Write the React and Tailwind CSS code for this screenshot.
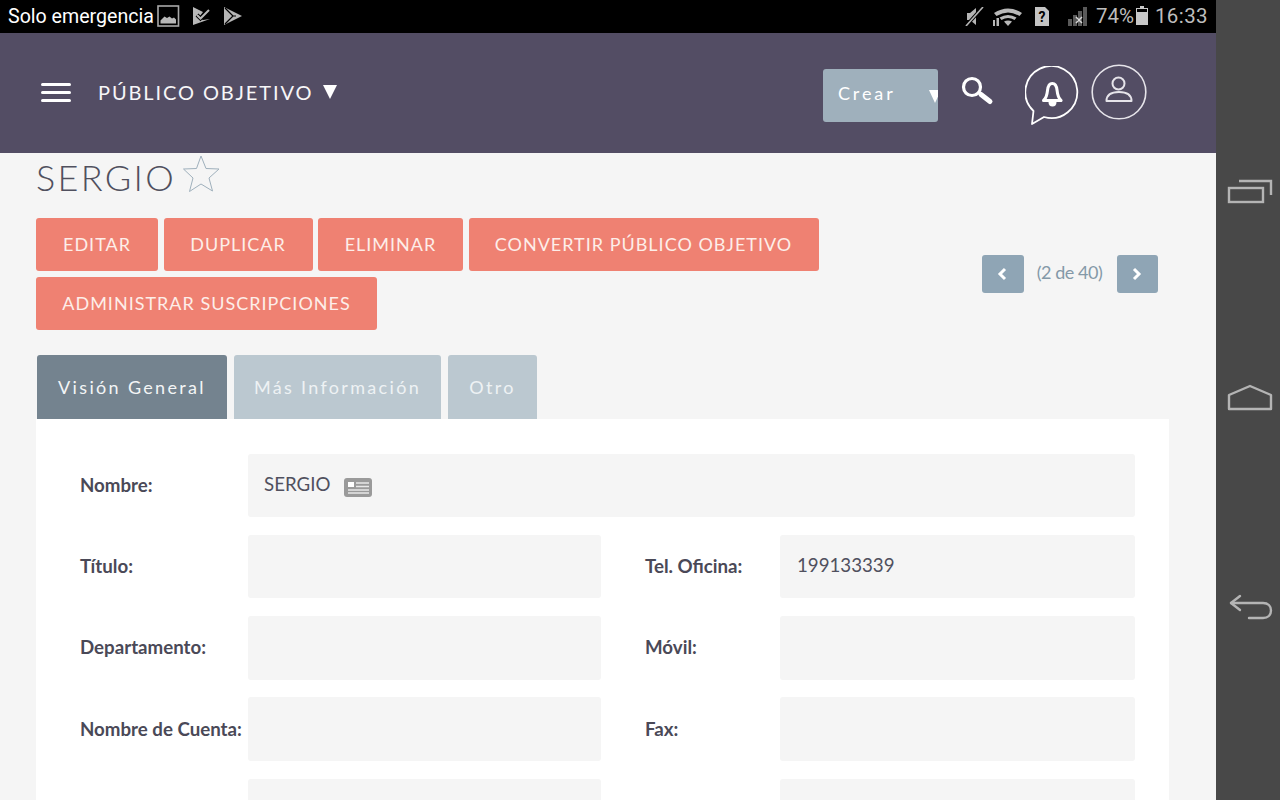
import React from "react";

const Field = ({ className = "", children }) => (
  <div className={`h-[63.5px] bg-[#f5f5f5] rounded-[3px] flex items-center text-[18.7px] text-[#50505e] pl-4 pb-[3px] ${className}`}>{children}</div>
);
const Label = ({ className = "", children }) => (
  <div className={`font-bold text-[18.7px] text-[#4a4957] whitespace-nowrap pb-[1px] ${className}`}>{children}</div>
);
const Btn = ({ w, children }) => (
  <button className={`h-[53px] ${w} bg-[#ef8172] rounded-[3px] text-[#fdeee9] text-[18px] tracking-[1px] flex items-center justify-center whitespace-nowrap`}>{children}</button>
);
const Tab = ({ w, active, children }) => (
  <div className={`${w} h-[64px] rounded-t-[3px] flex items-center justify-center pt-[2px] text-[18px] tracking-[2.33px] whitespace-nowrap ${active ? "bg-[#74838f] text-[#f3f5f6]" : "bg-[#bbc8d0] text-[#eef2f4]"}`}>{children}</div>
);
const Row = ({ l, v, r, rv }) => (
  <div className="flex items-center h-[63.5px] mb-[17.8px]">
    <Label className="w-[168px]">{l}</Label>
    <Field className="w-[353px]">{v}</Field>
    <Label className="w-[135px] ml-[44px]">{r}</Label>
    <Field className="w-[355px] pl-[17px]">{rv}</Field>
  </div>
);

export default function App() {
  return (
    <div className="w-[1280px] h-[800px] overflow-hidden flex font-['Lato',sans-serif]">
      <div className="w-[1216px] h-full flex flex-col overflow-hidden bg-[#f5f5f5]">
        {/* status bar */}
        <div className="h-[33px] shrink-0 bg-black flex items-center justify-between pl-2 pr-2 font-['Roboto',sans-serif] text-[20.5px]">
          <div className="flex items-center text-white">
            <span className="text-[19.6px]">Solo emergencia</span>
            <svg width="23" height="22" viewBox="0 0 23 22" className="ml-[3px]" fill="none">
              <rect x="1" y="1" width="20.500" height="20" stroke="#a8a8a8" strokeWidth="1.600" />
              <path d="M3.500 18.500v-3l4-4 2.500 1.500 2.500-1.500 2.500 2 2-1 2 2v4z" fill="#b8b8b8" />
            </svg>
            <svg width="18" height="18" viewBox="0 0 18 18" className="ml-[13px]" fill="#b8b8b8">
              <path d="M0 0l10 5-3 4-1 0 0 0 2 3 2 1 7-1-17 6z" />
              <path d="M4 8l3.500 3.500L16 3" stroke="#000" strokeWidth="4" fill="none" />
              <path d="M4 8l3.500 3.500L16 3" stroke="#b8b8b8" strokeWidth="2" fill="none" />
            </svg>
            <svg width="18" height="18" viewBox="0 0 18 18" className="ml-[13px]" fill="#b5b5b5">
              <path d="M0 0l18 9-18 9z" />
              <path d="M1 1l8 8-8 8M9 9h3" stroke="#000" strokeWidth="1.200" fill="none" />
            </svg>
          </div>
          <div className="flex items-center text-[#bdbdbd]">
            <svg width="19" height="19" viewBox="0 0 19 19" fill="#b5b5b5">
              <path d="M2 6h3l6-5v17l-6-5H2z" />
              <path d="M1 19L17 1" stroke="#000" strokeWidth="3.400" />
              <path d="M1 19L18 0" stroke="#b5b5b5" strokeWidth="1.600" />
            </svg>
            <svg width="30" height="18" viewBox="0 0 30 18" className="ml-[9px]" fill="#b8b8b8">
              <path d="M1 5q14-9 28 0l-2.500 3q-11.500-7-23 0z" />
              <path d="M6.500 9.500q8.500-5 17 0l-2 2.500q-6.500-4-13 0z" />
              <path d="M11 13.500q4-2.200 8 0L15 18z" />
              <rect x="0" y="12" width="2" height="6" />
              <rect x="3.500" y="10" width="2.500" height="8" />
            </svg>
            <svg width="14" height="19" viewBox="0 0 14 19" className="ml-[12px]">
              <path d="M0 0h10l4 4v15H0z" fill="#c4c4c4" />
              <text x="7" y="15" textAnchor="middle" fontSize="14" fontWeight="700" fill="#000" fontFamily="Roboto">?</text>
            </svg>
            <svg width="20" height="19" viewBox="0 0 20 19" className="ml-[19px]">
              <rect x="0" y="12" width="4" height="7" fill="#5a5a5a" />
              <rect x="5" y="8" width="4" height="11" fill="#5a5a5a" />
              <rect x="10" y="4" width="4" height="15" fill="#5a5a5a" />
              <rect x="15" y="0" width="4" height="19" fill="#5a5a5a" />
              <path d="M8 10l6 6m0-6l-6 6" stroke="#d8d8d8" strokeWidth="1.500" />
            </svg>
            <span className="ml-[8px]">74%</span>
            <svg width="12" height="19" viewBox="0 0 12 19" className="ml-[2px] mb-[3px]">
              <path d="M4 0h4v2h4v17H0V2h4z" fill="#c8c8c8" />
              <path d="M1 3h10v3H1z" fill="#000" />
            </svg>
            <span className="ml-[7px] tracking-[0.4px]">16:33</span>
          </div>
        </div>

        {/* header */}
        <div className="h-[120px] shrink-0 bg-[#534d64] flex items-center pl-[41px] relative">
          <div className="flex flex-col gap-[5px] w-[30px] mt-[-1px]">
            <div className="h-[3px] bg-white rounded-sm" />
            <div className="h-[3px] bg-white rounded-sm" />
            <div className="h-[3px] bg-white rounded-sm" />
          </div>
          <div className="ml-[27px] text-[#f7f6f8] text-[20px] tracking-[1.9px] whitespace-nowrap mt-[-3px]">PÚBLICO OBJETIVO</div>
          <svg width="14" height="14" viewBox="0 0 14 14" className="ml-[10px] mt-[-2px]"><path d="M0 0h14L7 14z" fill="#fff" /></svg>
          <div className="flex-1" />
          <div className="w-[115px] h-[53px] mt-[5px] bg-[#9fb0bc] rounded-[3px] text-white text-[18px] tracking-[2.9px] flex items-center pl-[15px] pb-[5px] relative overflow-hidden">
            Crear
            <svg width="12" height="13" viewBox="0 0 12 13" className="absolute right-[-3px] top-[21px]"><path d="M0 0h12L6 13z" fill="#fff" /></svg>
          </div>
          <svg width="34" height="34" viewBox="0 0 34 34" className="ml-[23px] mb-[6px]" fill="none" stroke="#fff">
            <circle cx="11" cy="14" r="8.500" strokeWidth="3.200" />
            <path d="M20 21.500l9 7" strokeWidth="5" strokeLinecap="round" />
          </svg>
          <svg width="58" height="62" viewBox="0 0 58 62" className="ml-[30px] mt-[8px]" fill="none">
            <path d="M8.500 45A26 26 0 1 1 19 51L7 58z" stroke="#fff" strokeWidth="1.800" strokeLinejoin="round" />
            <path d="M18.500 34.500c3-2.500 3.500-5 4-10 .4-4 2.300-7 4.800-7s4.400 3 4.800 7c.5 5 1 7.500 4 10z" stroke="#fff" strokeWidth="3" strokeLinejoin="round" />
            <path d="M23.500 36h8c0 3-1.500 4.500-4 4.500s-4-1.500-4-4.500z" fill="#fff" />
          </svg>
          <svg width="56" height="56" viewBox="0 0 56 56" className="ml-[8px] mr-[69px] mb-[2px]" fill="none" stroke="#e6e4ea">
            <circle cx="28" cy="28" r="26.800" strokeWidth="1.600" />
            <circle cx="27.500" cy="19.500" r="6" strokeWidth="2" />
            <path d="M15.500 37c0-6 5-9 12.500-9s12.500 3 12.500 9z" strokeWidth="2" strokeLinejoin="round" />
          </svg>
        </div>

        {/* body */}
        <div className="flex-1 pl-[36px] pr-[47px] min-h-0">
          <div className="flex items-start h-[65px]">
            <span className="text-[36px] leading-[48px] font-light tracking-[2.3px] text-[#50505e]">SERGIO</span>
            <svg width="38" height="38" viewBox="0 0 38 38" className="ml-[7px] mt-[1px]" fill="none" stroke="#9fb0bc" strokeWidth="1">
              <path d="M18 2l5 12.500 13 .5-10 9 3.500 13L18 30 6.500 37.500 10 24 0.500 15l13-.5z" />
            </svg>
          </div>
          <div className="flex justify-between">
            <div className="w-[800px] flex flex-wrap gap-x-[5.500px] gap-y-[6px]">
              <Btn w="w-[122px]">EDITAR</Btn>
              <Btn w="w-[149px]">DUPLICAR</Btn>
              <Btn w="w-[145px]">ELIMINAR</Btn>
              <Btn w="w-[350px]">CONVERTIR PÚBLICO OBJETIVO</Btn>
              <Btn w="w-[341px]">ADMINISTRAR SUSCRIPCIONES</Btn>
            </div>
            <div className="flex items-center h-[112px] mr-[11px]">
              <div className="w-[42px] h-[38px] bg-[#8fa5b5] rounded-[3px] flex items-center justify-center pr-[3px]">
                <svg width="12" height="14" viewBox="0 0 12 14" fill="none" stroke="#fff" strokeWidth="3"><path d="M9 2L4 7l5 5" /></svg>
              </div>
              <span className="w-[93px] text-center pr-[2px] text-[18px] tracking-[-0.45px] text-[#8499a8] whitespace-nowrap mb-[3px]">(2 de 40)</span>
              <div className="w-[41px] h-[38px] bg-[#8fa5b5] rounded-[3px] flex items-center justify-center pr-[1px]">
                <svg width="12" height="14" viewBox="0 0 12 14" fill="none" stroke="#fff" strokeWidth="3"><path d="M3 2l5 5-5 5" /></svg>
              </div>
            </div>
          </div>
          <div className="flex gap-[7px] pl-[1px] mt-[24.500px]">
            <Tab w="w-[190px]" active>Visión General</Tab>
            <Tab w="w-[207px]">Más Información</Tab>
            <Tab w="w-[89px]">Otro</Tab>
          </div>
          <div className="bg-white w-[1133px] h-[500px] pt-[35px] pl-[44px]">
            <div className="flex items-center h-[63.5px] mb-[17.8px]">
              <Label className="w-[168px]">Nombre:</Label>
              <Field className="w-[887px]">
                <span>SERGIO</span>
                <svg width="28" height="19" viewBox="0 0 28 19" className="ml-[14px] mt-[7px]">
                  <rect width="28" height="19" rx="3" fill="#9a9a9a" />
                  <rect x="4" y="4" width="6" height="5" fill="#fff" />
                  <path d="M12 5h13M12 8.500h13M4 12h21M4 15h21" stroke="#e8e8e8" strokeWidth="1.300" />
                </svg>
              </Field>
            </div>
            <Row l="Título:" v="" r="Tel. Oficina:" rv="199133339" />
            <Row l="Departamento:" v="" r="Móvil:" rv="" />
            <Row l="Nombre de Cuenta:" v="" r="Fax:" rv="" />
            <Row l="" v="" r="" rv="" />
          </div>
        </div>
      </div>

      {/* nav bar */}
      <div className="w-[64px] h-full bg-[#484848] relative">
        <svg width="46" height="28" viewBox="0 0 46 28" className="absolute left-[11px] top-[177px]" fill="none" stroke="#b4b4b4" strokeWidth="2.400">
          <rect x="2" y="11" width="34" height="14" />
          <path d="M12 4h32v14" />
        </svg>
        <svg width="46" height="28" viewBox="0 0 46 28" className="absolute left-[11px] top-[384px]" fill="none" stroke="#b4b4b4" strokeWidth="2.400">
          <path d="M2 25V11L23 2l21 9v14z" strokeLinejoin="round" />
        </svg>
        <svg width="46" height="28" viewBox="0 0 46 28" className="absolute left-[11px] top-[592px]" fill="none" stroke="#b4b4b4" strokeWidth="2.400">
          <path d="M13 4L4 11l9 7" strokeLinecap="round" strokeLinejoin="round" />
          <path d="M4 11h32c5 0 8 3 8 7.500s-3 7.500-8 7.500H22" strokeLinecap="round" />
        </svg>
      </div>
    </div>
  );
}
